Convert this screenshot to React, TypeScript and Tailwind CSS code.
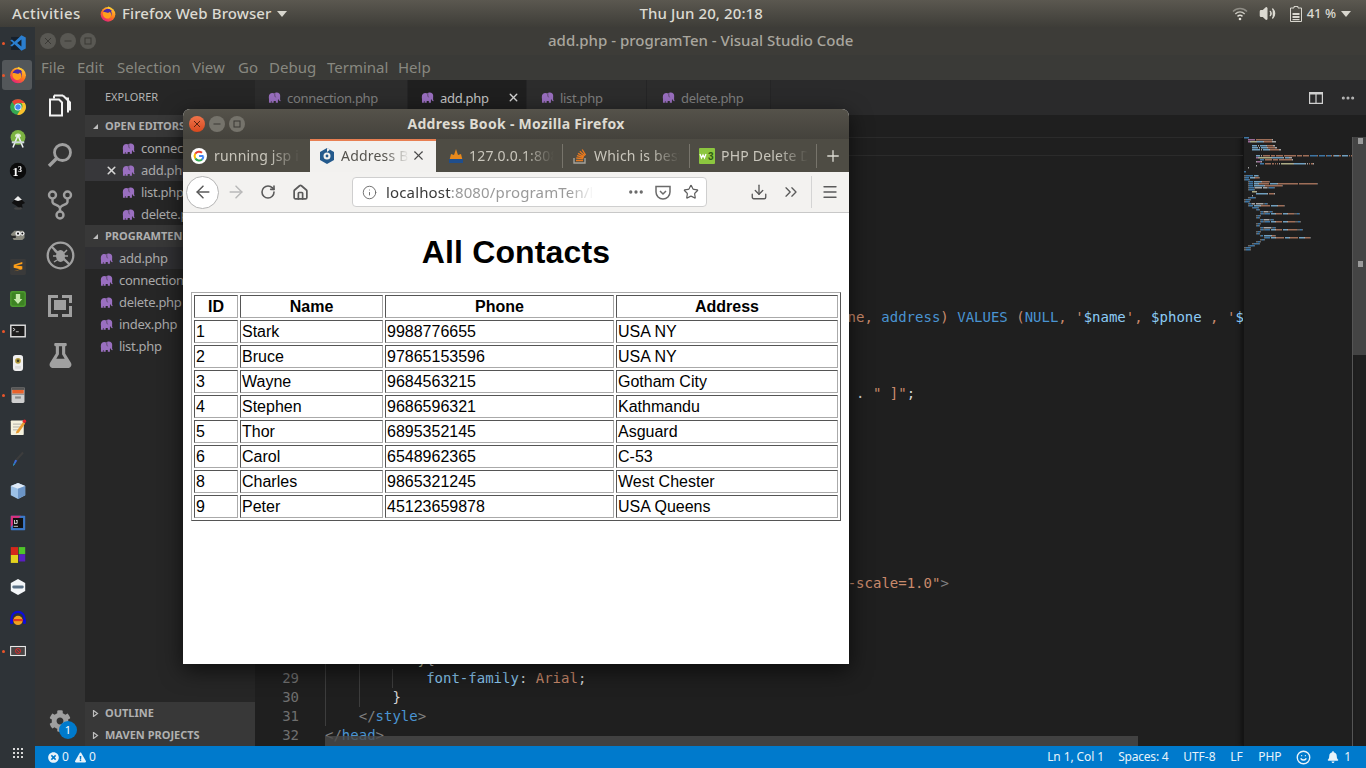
import React from 'react';
import { ArrowLeft, ArrowRight, RotateCw, Info, Star, Download, ChevronsRight, Menu, X, Plus, Smile, Volume2, MoreHorizontal, House } from 'lucide-react';
import { FaBell, FaCog, FaExclamationTriangle, FaFlask, FaTimesCircle } from 'react-icons/fa';

const K = '#4a94d2', S = '#c98a6c', V = '#8ccbf5', W = '#d4d4d4', F = '#dcdcaa', P = '#c586c0', G = '#808080';
type Tok = [string, string];
const CODE: Tok[][] = [
  [['<?php', K]],
  [['    ', W], ['include', P], [' "connection.php"', S], [';', W]],
  [['    ', W], ['if', P], ['(', W], ['isset', F], ['(', W], ['$_POST', V], ['[', W], ["'submit'", S], [']', W], ['))', W], ['{', W]],
  [],
  [['        ', W], ['$name', V], [' = ', W], ['$_POST', V], ['[', W], ["'name'", S], ['];', W]],
  [['        ', W], ['$phone', V], [' = ', W], ['$_POST', V], ['[', W], ["'phone'", S], ['];', W]],
  [['        ', W], ['$address', V], [' = ', W], ['$_POST', V], ['[', W], ["'address'", S], ['];', W]],
  [],
  [],
  [['            ', W], ['$sql', V], [' = ', W], ['"INSERT INTO contact (contact_id, name, phone, ', S], ['address', K], [') ', S], ['VALUES', K], [' (', S], ['NULL', K], [", '", S], ['$name', V], ["', ", S], ['$phone', V], [" , '", S], ['$address', V], ["')\"", S], [';', W]],
  [['            ', W], ['if', P], ['(', W], ['mysqli_query', F], ['(', W], ['$connection', V], [', ', W], ['$sql', V], ['))', W], ['{', W]],
  [['                ', W], ['echo', K], [' "Record added successfully"', S], [';', W]],
  [['            ', W], ['}', W], ['else', P], ['{', W]],
  [['                ', W], ['echo', K], [' "Error is [ "', S], [' . ', W], ['mysqli_error', F], ['(', W], ['$connection', V], [')', W], [' . ', W], ['" ]"', S], [';', W]],
  [['            ', W], ['}', W]],
  [['    ', W], ['}', W]],
  [],
  [['?>', K]],
  [],
  [['<!', G], ['DOCTYPE', K], [' ', W], ['html', V], ['>', G]],
  [['<', G], ['html', K], [' ', W], ['lang', V], ['=', W], ['"en"', S], ['>', G]],
  [['<', G], ['head', K], ['>', G]],
  [['    ', W], ['<', G], ['meta', K], [' ', W], ['charset', V], ['=', W], ['"UTF-8"', S], ['>', G]],
  [['    ', W], ['<', G], ['meta', K], [' ', W], ['name', V], ['=', W], ['"viewport"', S], [' ', W], ['content', V], ['=', W], ['"width=device-width, initial-scale=1.0"', S], ['>', G]],
  [['    ', W], ['<', G], ['meta', K], [' ', W], ['http-equiv', V], ['=', W], ['"X-UA-Compatible"', S], ['>', G]],
  [['    ', W], ['<', G], ['title', K], ['>', G], ['Address Book', W], ['</', G], ['title', K], ['>', G]],
  [['    ', W], ['<', G], ['style', K], ['>', G]],
  [['        ', W], ['body', F], ['{', W]],
  [['            ', W], ['font-family', V], [': ', W], ['Arial', S], [';', W]],
  [['        ', W], ['}', W]],
  [['    ', W], ['</', G], ['style', K], ['>', G]],
  [['</', G], ['head', K], ['>', G]],
  [['<', G], ['body', K], ['>', G]],
  [['    ', W], ['<', G], ['h1', K], ['>', G], ['Add Contact', W], ['</', G], ['h1', K], ['>', G]],
  [['    ', W], ['<', G], ['form', K], [' ', W], ['action', V], ['=', W], ['"add.php"', S], [' ', W], ['method', V], ['=', W], ['"POST"', S], ['>', G]],
  [['        ', W], ['<', G], ['table', K], ['>', G]],
  [['            ', W], ['<', G], ['tr', K], ['>', G]],
  [['                ', W], ['<', G], ['td', K], ['>', G], ['Name', W], ['</', G], ['td', K], ['>', G]],
  [['                ', W], ['<', G], ['td', K], ['><', G], ['input', K], [' ', W], ['type', V], ['=', W], ['"text"', S], [' ', W], ['name', V], ['=', W], ['"name"', S], ['></', G], ['td', K], ['>', G]],
  [['            ', W], ['</', G], ['tr', K], ['>', G]],
  [['            ', W], ['<', G], ['tr', K], ['>', G]],
  [['                ', W], ['<', G], ['td', K], ['>', G], ['Phone', W], ['</', G], ['td', K], ['>', G]],
  [['                ', W], ['<', G], ['td', K], ['><', G], ['input', K], [' ', W], ['type', V], ['=', W], ['"text"', S], [' ', W], ['name', V], ['=', W], ['"phone"', S], ['></', G], ['td', K], ['>', G]],
  [['            ', W], ['</', G], ['tr', K], ['>', G]],
  [['            ', W], ['<', G], ['tr', K], ['>', G]],
  [['                ', W], ['<', G], ['td', K], ['>', G], ['Address', W], ['</', G], ['td', K], ['>', G]],
  [['                ', W], ['<', G], ['td', K], ['><', G], ['input', K], [' ', W], ['type', V], ['=', W], ['"text"', S], [' ', W], ['name', V], ['=', W], ['"address"', S], ['></', G], ['td', K], ['>', G]],
  [['            ', W], ['</', G], ['tr', K], ['>', G]],
  [['            ', W], ['<', G], ['tr', K], ['>', G]],
  [['                ', W], ['<', G], ['td', K], [' ', W], ['colspan', V], ['=', W], ['"2"', S], ['>', G]],
  [['                    ', W], ['<', G], ['input', K], [' ', W], ['type', V], ['=', W], ['"submit"', S], [' ', W], ['name', V], ['=', W], ['"submit"', S], [' ', W], ['value', V], ['=', W], ['"Add"', S], ['>', G]],
  [['                ', W], ['</', G], ['td', K], ['>', G]],
  [['            ', W], ['</', G], ['tr', K], ['>', G]],
  [['        ', W], ['</', G], ['table', K], ['>', G]],
  [['    ', W], ['</', G], ['form', K], ['>', G]],
  [['</', G], ['body', K], ['>', G]],
  [['</', G], ['html', K], ['>', G]],
];

function Minimap() {
  const rects: React.ReactElement[] = [];
  CODE.forEach((line, y) => {
    let col = 0;
    line.forEach(([t, c], i) => {
      const re = /\S+/g;
      let m: RegExpExecArray | null;
      while ((m = re.exec(t))) {
        rects.push(<rect key={`${y}-${i}-${m.index}`} x={col + m.index} y={y * 2} width={m[0].length} height={1.5} fill={c} opacity={0.75} />);
      }
      col += t.length;
    });
  });
  return (
    <svg width="109" height="120" viewBox="0 0 109 120">
      {rects}
    </svg>
  );
}

const Elephant = ({ className = '' }: { className?: string }) => (
  <svg viewBox="0 0 16 13" className={`w-[13px] h-[11px] ${className}`} fill="#9a6fc0">
    <path d="M1 6C1 2.5 2.8 1 5.5 1c1 0 1.5.5 2.2.5C8.5.6 9.6.3 10.8.3c2.7 0 4.2 1.8 4.2 4 0 1.5-.2 3.2-.1 4.7.1 1.2.6 1.5 1.1 1.6-.6.6-2.2.6-2.7-.6l-.2-1.5-.9.7V13H9.6v-2.3H7V13H4.3v-2.3H3.6V13H1.2V8.2C1 7.400 1 6.700 1 6z" />
    <path d="M8.600 1.600c-.500 1.500-.300 3.400.8 4.700" stroke="#2a2a2a" strokeWidth=".7" fill="none" />
  </svg>
);

const FirefoxLogo = ({ size = 22 }: { size?: number }) => (
  <svg width={size} height={size} viewBox="0 0 24 24">
    <defs>
      <linearGradient id="ffa" x1="0.8" y1="0" x2="0.2" y2="1">
        <stop offset="0" stopColor="#ffd43a" />
        <stop offset="0.5" stopColor="#ff7a1a" />
        <stop offset="1" stopColor="#e31587" />
      </linearGradient>
    </defs>
    <circle cx="12" cy="12.500" r="11" fill="url(#ffa)" />
    <path d="M4.500 11a7.500 7.500 0 0 1 13-4.500L15 12z" fill="#4a2aa8" />
    <circle cx="12" cy="11.500" r="5.500" fill="#4a2aa8" />
    <path d="M4.500 9.500c2-.6 3.500-.4 5.500.4 1.600.6 3.800.2 4.800-1.400 1.300 1.600 2.500 3.300 1.900 6-.6 2.700-3.200 4.700-6.400 4.400C6.500 18.500 3.500 14 4.500 9.500z" fill="#ff9f1c" />
    <path d="M12 .5c3 1.300 5.300 3.500 5.700 6.500-1.500-2-3.700-3-6.200-3.200C12.500 3 12.500 1.500 12 .5z" fill="#ffd02e" />
  </svg>
);

const GoogleG = () => (
  <svg width="16" height="16" viewBox="0 0 16 16">
    <circle cx="8" cy="8" r="8" fill="#fff" />
    <path d="M12.500 8.100H8.100" stroke="#4285f4" strokeWidth="2" fill="none" />
    <path d="M12.400 8.500a4.500 4.500 0 0 1-1.500 3" stroke="#4285f4" strokeWidth="2" fill="none" />
    <path d="M11 11.400A4.500 4.500 0 0 1 4.300 10.400" stroke="#34a853" strokeWidth="2" fill="none" />
    <path d="M4.300 10.400a4.500 4.500 0 0 1 0-4.800" stroke="#fbbc05" strokeWidth="2" fill="none" />
    <path d="M4.300 5.600A4.500 4.500 0 0 1 11 4.800" stroke="#ea4335" strokeWidth="2" fill="none" />
  </svg>
);

const launcherIcons: React.ReactNode[] = [
  <svg width="24" height="24" viewBox="0 0 20 20"><rect x="2" y="3" width="14" height="15" fill="#16202c" /><path d="M14 1l5 2.500v13L14 19 6 11.500 3 14l-2-1 3.500-3L1 7l2-1 3 2.500z" fill="#2b7fd0" /><path d="M14 6L9 10l5 4z" fill="#16202c" /></svg>,
  <FirefoxLogo size={24} />,
  <svg width="24" height="24" viewBox="0 0 22 22"><circle cx="11" cy="11" r="10" fill="#34a853" /><path d="M11 1a10 10 0 0 1 8.700 5H11a5 5 0 0 0-4.500 2.800L3.500 4A10 10 0 0 1 11 1z" fill="#ea4335" /><path d="M19.700 6A10 10 0 0 1 10 21l4.500-7A5 5 0 0 0 15 6z" fill="#fbc02d" /><circle cx="11" cy="11" r="4.500" fill="#fff" /><circle cx="11" cy="11" r="3.500" fill="#4285f4" /></svg>,
  <svg width="24" height="26" viewBox="0 0 22 24"><circle cx="11" cy="10" r="9.500" fill="#7cb342" /><path d="M7 9a4 4 0 0 1 8 0z" fill="#dcedc8" /><path d="M11 7L4.500 23M11 7l6.500 16" stroke="#eceff1" strokeWidth="2" /><rect x="3" y="15" width="16" height="2.500" fill="#cfd8dc" /></svg>,
  <svg width="24" height="24" viewBox="0 0 24 24"><circle cx="12" cy="12" r="11.500" fill="#0b0b0b" /><text x="4.500" y="19" fontSize="17" fontWeight="700" fill="#fff" fontFamily="Liberation Serif, serif">1</text><text x="12" y="14" fontSize="11" fontWeight="700" fill="#fff" fontFamily="Liberation Serif, serif">3</text></svg>,
  <svg width="24" height="24" viewBox="0 0 22 22"><path d="M11 2l9 9-4 2 1 4-3-1-2 3-2-4-7-4z" fill="#101010" /><path d="M11 2l5 5-5 1.500L6 7z" fill="#eee" /><ellipse cx="11" cy="18" rx="5" ry="1.500" fill="#444" /></svg>,
  <svg width="24" height="20" viewBox="0 0 24 20"><path d="M2 9l5-5h12l2 3v7l-3 3H6z" fill="#8a8a7e" /><circle cx="12" cy="8" r="3.500" fill="#eee" /><circle cx="18" cy="8" r="3" fill="#eee" /><circle cx="12" cy="8" r="1.500" fill="#111" /><circle cx="18" cy="8" r="1.300" fill="#111" /><path d="M2 11h7v3H3z" fill="#2b2b2b" /></svg>,
  <svg width="24" height="24" viewBox="0 0 24 24"><rect x="1" y="1" width="22" height="22" rx="2" fill="#3a3a3a" /><path d="M18 5L6 9v4l9 2-9 3 12-3v-4L9 10l9-2z" fill="#ff9f18" /></svg>,
  <svg width="24" height="24" viewBox="0 0 24 24"><rect x="1" y="1" width="22" height="22" rx="3" fill="#4d9a2f" /><rect x="3" y="3" width="18" height="18" rx="2" fill="#3d8323" /><path d="M9 5h6v7h3l-6 7-6-7h3z" fill="#c6e8ac" /></svg>,
  <svg width="24" height="20" viewBox="0 0 24 20"><rect x="1" y="1" width="22" height="18" fill="#ddd" /><rect x="3" y="3" width="18" height="14" fill="#1d1d1d" /><path d="M5 6l3 2-3 2" stroke="#fff" fill="none" /><path d="M9 11h4" stroke="#fff" /></svg>,
  <svg width="20" height="24" viewBox="0 0 20 24"><rect x="3" y="1" width="14" height="22" rx="4" fill="#efefef" /><circle cx="10" cy="9" r="4" fill="#b29a3c" /><circle cx="10" cy="9" r="1.800" fill="#3d3d2a" /><rect x="6" y="16" width="8" height="4" fill="#ddd" /></svg>,
  <svg width="24" height="24" viewBox="0 0 24 24"><rect x="3" y="1" width="18" height="22" rx="2" fill="#cfcfcf" /><rect x="3" y="1" width="18" height="4" fill="#555" /><rect x="4" y="5" width="16" height="5" fill="#e8622c" /><rect x="8" y="14" width="8" height="3" fill="#8a8a8a" /><path d="M3 11h18" stroke="#666" /></svg>,
  <svg width="24" height="24" viewBox="0 0 24 24"><rect x="2" y="3" width="18" height="20" rx="1" fill="#f4f1de" /><path d="M5 8h12M5 12h10M5 16h8" stroke="#999" /><path d="M10 18l9-13 3 2-9 13-4 1z" fill="#e89b2f" /><circle cx="21" cy="4" r="2.500" fill="#e0242c" /></svg>,
  <svg width="20" height="24" viewBox="0 0 20 24"><path d="M16 2l2 2-9 10-3-1z" fill="#3d3d3d" /><path d="M6 13l3 1-3 5-2-1z" fill="#3b6ad8" /><path d="M4 18l2 1-3 3z" fill="#2bb2f0" /></svg>,
  <svg width="24" height="24" viewBox="0 0 24 24"><path d="M12 1l10 4v13l-10 5-10-5V5z" fill="#9cc1e6" /><path d="M12 1l10 4-10 4L2 5z" fill="#dfeaf6" /><path d="M12 9v14l10-5V5z" fill="#6c95c6" /></svg>,
  <svg width="24" height="24" viewBox="0 0 24 24"><rect x="2" y="2" width="20" height="20" rx="1" fill="#3b78c9" /><path d="M2 2h14L2 18z" fill="#d8327f" /><rect x="5" y="5" width="14" height="14" fill="#111" /><text x="6" y="13" fontSize="7" fontWeight="700" fill="#fff" fontFamily="Liberation Sans, sans-serif">IJ</text><rect x="6" y="16" width="6" height="1" fill="#fff" /></svg>,
  <svg width="24" height="24" viewBox="0 0 24 24"><rect x="2" y="1" width="10" height="11" fill="#d4281c" /><rect x="13" y="1" width="9" height="10" fill="#4fc52a" /><rect x="2" y="12" width="10" height="11" fill="#e3d21d" /><rect x="13" y="11" width="9" height="10" fill="#5a1fc0" /></svg>,
  <svg width="24" height="24" viewBox="0 0 24 24"><path d="M12 1l10 5.500v11L12 23 2 17.500v-11z" fill="#f3f6f8" /><rect x="4" y="10" width="16" height="4" rx="2" fill="#5a7186" /></svg>,
  <svg width="24" height="24" viewBox="0 0 24 24"><path d="M3 15V11a9 9 0 0 1 18 0v4" stroke="#0d0dd8" strokeWidth="3" fill="none" /><circle cx="12" cy="14" r="6.500" fill="#f0a21e" /><rect x="5" y="12" width="14" height="3" fill="#e03a1e" /><rect x="1" y="12" width="4" height="7" rx="1.500" fill="#0d0dd8" /><rect x="19" y="12" width="4" height="7" rx="1.500" fill="#0d0dd8" /></svg>,
  <svg width="24" height="20" viewBox="0 0 24 20"><rect x="1" y="3" width="22" height="14" fill="#e8e8e8" /><rect x="2.500" y="4.500" width="19" height="11" fill="#4a4646" /><circle cx="12" cy="10" r="3.500" fill="none" stroke="#d92a2a" strokeWidth="1.300" /><path d="M9.500 7.500l5 5" stroke="#d92a2a" strokeWidth="1.300" /></svg>,
];
const running = new Set([0, 1, 9, 11, 19]);

function Launcher() {
  return (
    <div className="w-[35px] bg-[#2e3337] flex flex-col shrink-0">
      {launcherIcons.map((ic, i) => (
        <div key={i} className="h-[32px] relative flex items-center justify-center">
          {i === 1 && <div className="absolute left-[2px] top-[1px] w-[30px] h-[30px] rounded-[3px] bg-[#53575a]" />}
          {running.has(i) && <div className="absolute left-[2px] top-[15px] w-[3px] h-[3px] rounded-full bg-[#e9552a]" />}
          <div className="relative flex scale-[0.72] items-center justify-center">{ic}</div>
        </div>
      ))}
      <div className="mt-auto mb-[10px] mx-auto grid grid-cols-3 gap-[2px] w-[10px]">
        {Array.from({ length: 9 }).map((_, i) => <div key={i} className="w-[2px] h-[2px] bg-[#d8d8d8]" />)}
      </div>
    </div>
  );
}

function TopBar() {
  return (
    <div className="h-[27px] shrink-0 relative flex items-center bg-gradient-to-b from-[#5b5850] to-[#3e3d38] text-[#dcdad2] text-[15px] font-medium">
      <span className="ml-[12px] w-[88px] tracking-[0.4px]">Activities</span>
      <FirefoxLogo size={16} />
      <span className="ml-[6px] tracking-[0.1px]">Firefox Web Browser</span>
      <svg width="10" height="6" viewBox="0 0 10 6" className="ml-[5px]"><path d="M0 0h10L5 6z" fill="#d8d6ce" /></svg>
      <span className="ml-[353px] tracking-[0.1px]">Thu Jun 20, 20:18</span>
      <div className="ml-auto flex items-center">
        <svg width="16" height="14" viewBox="0 0 16 14" fill="none" stroke="#8e8c85" strokeWidth="1.500" className="mr-[11px]">
          <path d="M1 4.500c4-4 10-4 14 0" /><path d="M3.300 7c2.800-2.600 6.600-2.600 9.400 0" stroke="#c9c7bf" /><path d="M5.500 9.300c1.500-1.200 3.500-1.200 5 0" stroke="#e2e0d9" /><circle cx="8" cy="12" r="1.300" fill="#e2e0d9" stroke="none" />
        </svg>
        <Volume2 size={17} strokeWidth={2} className="text-[#dcdad2] mr-[14px]" fill="#dcdad2" />
        <svg width="12" height="16" viewBox="0 0 12 16" className="mr-[5px]"><path d="M4 .5h4v1.500h3.500v13.500H.5V2H4z" fill="none" stroke="#d8d6ce" strokeWidth="1" /><rect x="2.500" y="7" width="7" height="2" fill="#d8d6ce" /><rect x="2.500" y="10" width="7" height="2" fill="#d8d6ce" /><rect x="2.500" y="13" width="7" height="1.200" fill="#d8d6ce" /></svg>
        <span className="text-[13px] mr-[5px]">41 %</span>
        <svg width="10" height="6" viewBox="0 0 10 6" className="mr-[15px]"><path d="M0 0h10L5 6z" fill="#d8d6ce" /></svg>
      </div>
    </div>
  );
}

const menu: [string, string][] = [['File', 'w-[36px]'], ['Edit', 'w-[40px]'], ['Selection', 'w-[75px]'], ['View', 'w-[46px]'], ['Go', 'w-[31px]'], ['Debug', 'w-[58px]'], ['Terminal', 'w-[71px]'], ['Help', 'w-[40px]']];

function WinBtn({ kind }: { kind: 'x' | 'm' | 'r' }) {
  return (
    <div className="w-[16px] h-[16px] rounded-full bg-[#595853] flex items-center justify-center">
      <svg width="8" height="8" viewBox="0 0 8 8" fill="none" stroke="#3a3935" strokeWidth="1">
        {kind === 'x' && <path d="M1 1l6 6M7 1L1 7" />}
        {kind === 'm' && <path d="M0.500 4h7" />}
        {kind === 'r' && <rect x="1" y="1" width="6" height="6" />}
      </svg>
    </div>
  );
}

function SideRow({ label, x = false, pl, active, hover }: { label: string; x?: boolean; pl: string; active?: boolean; hover?: boolean }) {
  return (
    <div className={`h-[22px] flex items-center relative text-[13px] tracking-[-0.3px] text-[#a9a9a9] ${pl} ${active ? 'bg-[#37373a]' : ''} ${hover ? 'bg-[#303033]' : ''}`}>
      {x && <X size={13} strokeWidth={3} className="absolute left-[20px] text-[#d6d6d6]" />}
      <Elephant className="mr-[6px]" />
      <span className="whitespace-nowrap pt-[2px]">{label}</span>
    </div>
  );
}

function SectionHead({ label, open }: { label: string; open?: boolean }) {
  return (
    <div className="h-[22px] flex items-center relative pl-[20px] text-[11px] font-bold text-[#b0b0b0] whitespace-nowrap overflow-hidden bg-[#383838]">
      <svg width="7" height="7" viewBox="0 0 7 7" className="absolute left-[7px]">
        {open ? <path d="M6 1v5H1z" fill="#bdbdbd" /> : <path d="M1.500 0.500L5.500 3.500 1.500 6.500z" fill="none" stroke="#bdbdbd" strokeWidth="1.200" />}
      </svg>
      {label}
    </div>
  );
}

function Activity() {
  const c = '#a0a0a0';
  return (
    <div className="w-[50px] shrink-0 bg-[#333333] flex flex-col items-center relative">
      <div className="h-[50px] flex items-center justify-center">
        <svg width="24" height="24" viewBox="0 0 24 24" fill="none" stroke="#f2f2f2" strokeWidth="2">
          <path d="M6 2.500h9M2 6.500h9l3 3v13H2z" /><path d="M18 5.500h2v14" /><path d="M6 2.500v3M15 2.500l7 7v8" />
        </svg>
      </div>
      <div className="h-[50px] flex items-center justify-center">
        <svg width="26" height="26" viewBox="0 0 26 26" fill="none" stroke={c} strokeWidth="2.800"><circle cx="15.500" cy="10.500" r="8" /><path d="M9.500 16.500L2 24" strokeWidth="3.400" /></svg>
      </div>
      <div className="h-[50px] flex items-center justify-center">
        <svg width="26" height="30" viewBox="0 0 26 30" fill="none" stroke={c} strokeWidth="2.400"><circle cx="5.500" cy="5" r="3.500" /><circle cx="20.500" cy="5" r="3.500" /><circle cx="13" cy="25" r="3.500" /><path d="M5.500 9v3c0 3 7.500 3 7.500 6.500V21M20.500 9v3c0 3-7.500 3-7.500 6.500" /></svg>
      </div>
      <div className="h-[50px] flex items-center justify-center">
        <svg width="29" height="29" viewBox="0 0 29 29" fill="none" stroke={c} strokeWidth="2.300"><circle cx="14.500" cy="14.500" r="12.800" /><path d="M5.500 5.500l18 18" /><ellipse cx="14.500" cy="15" rx="4.500" ry="6" fill={c} stroke="none" /><path d="M8 9l3 3M21 9l-3 3M7 15h4M18 15h4M8 21l3-2M21 21l-3-2" strokeWidth="1.500" /></svg>
      </div>
      <div className="h-[50px] flex items-center justify-center">
        <svg width="24" height="24" viewBox="0 0 24 24" fill={c}><path d="M0 2h10v3H3v16h7v3H0zM14 2h10v8h-3V5h-7zM14 21h7v-8h3v11H14zM6 7h12v10H6z" /></svg>
      </div>
      <div className="h-[50px] flex items-center justify-center">
        <FaFlask size={25} color={c} />
      </div>
      <div className="absolute bottom-[5px] left-[11px] w-[32px] h-[32px]">
        <FaCog size={22} color={c} className="absolute left-[3px] top-[1px]" />
        <div className="absolute left-[13px] top-[12px] w-[18px] h-[18px] rounded-full bg-[#007acc] text-white text-[11px] flex items-center justify-center">1</div>
      </div>
    </div>
  );
}

function Sidebar() {
  return (
    <div className="w-[170px] shrink-0 bg-[#262626] flex flex-col">
      <div className="h-[35px] flex items-center pl-[20px] text-[11px] text-[#b4b4b4]">EXPLORER</div>
      <SectionHead label="OPEN EDITORS" open />
      <SideRow label="connection.php" pl="pl-[37px]" />
      <SideRow label="add.php" pl="pl-[37px]" active x />
      <SideRow label="list.php" pl="pl-[37px]" />
      <SideRow label="delete.php" pl="pl-[37px]" />
      <SectionHead label="PROGRAMTEN" open />
      <SideRow label="add.php" pl="pl-[15px]" hover />
      <SideRow label="connection.php" pl="pl-[15px]" />
      <SideRow label="delete.php" pl="pl-[15px]" />
      <SideRow label="index.php" pl="pl-[15px]" />
      <SideRow label="list.php" pl="pl-[15px]" />
      <div className="flex-1" />
      <SectionHead label="OUTLINE" />
      <SectionHead label="MAVEN PROJECTS" />
    </div>
  );
}

function EditorTab({ label, w, active, pl }: { label: string; w: string; active?: boolean; pl: string }) {
  return (
    <div className={`h-full ${w} ${pl} shrink-0 flex items-center relative text-[13px] tracking-[-0.3px] border-r border-[#252526] ${active ? 'bg-[#1f1f1f] text-[#c4c4c4]' : 'bg-[#2c2c2c] text-[#7f7f7f]'}`}>
      <Elephant className="mr-[6px]" />
      <span className="pt-[2px]">{label}</span>
      {active && <X size={13} strokeWidth={2.600} className="absolute right-[6px] text-[#d4d4d4]" />}
    </div>
  );
}

function Editor() {
  return (
    <div className="flex-1 min-w-0 flex flex-col relative">
      <div className="h-[35px] shrink-0 bg-[#2a2a2b] flex items-center">
        <EditorTab label="connection.php" w="w-[153px]" pl="pl-[13px]" />
        <EditorTab label="add.php" w="w-[119px]" pl="pl-[13px]" active />
        <EditorTab label="list.php" w="w-[120px]" pl="pl-[14px]" />
        <EditorTab label="delete.php" w="w-[124px]" pl="pl-[15px]" />
        <div className="ml-auto flex items-center">
          <svg width="14" height="12" viewBox="0 0 14 12" fill="none" stroke="#d0d0d0" strokeWidth="1.200" className="mr-[17px]"><path d="M.600.600h12.800v10.800H.600zM7 .600v10.800" /><path d="M.600 1.500h12.800" strokeWidth="2" /></svg>
          <MoreHorizontal size={16} strokeWidth={2.600} className="text-[#b8b8b8] mr-[10px]" />
        </div>
      </div>
      <div className="h-[22px] shrink-0 bg-[#1f1f1f]" />
      <div className="flex-1 min-h-0 flex bg-[#1f1f1f] overflow-hidden">
        <div className="w-[988px] shrink-0 overflow-hidden font-['DejaVu_Sans_Mono',monospace] text-[14px] leading-[19px]">
          {CODE.slice(0, 33).map((line, i) => {
            const text = line.map((t) => t[0]).join('');
            const indent = (text.match(/^ */) as RegExpMatchArray)[0].length;
            return (
              <div key={i} className={`h-[19px] flex relative ${i === 0 ? 'border-y border-[#2b2b2b] leading-[17px]' : ''}`}>
                <span className="w-[44px] shrink-0 text-right text-[#6f6f6f]">{i + 1}</span>
                <span className="pl-[26px] whitespace-pre">
                  {line.map(([t, c], j) => <span key={j} style={{ color: c }}>{t}</span>)}
                </span>
                {Array.from({ length: Math.floor(indent / 4) }).map((_, k) => (
                  <i key={k} className="absolute top-0 bottom-0 w-px bg-[#3d3d3d]" style={{ left: 70 + k * 33.7 }} />
                ))}
              </div>
            );
          })}
        </div>
        <div className="w-[109px] shrink-0 border-l border-[#141414] shadow-[-2px_0_4px_#111]">
          <Minimap />
        </div>
        <div className="w-[14px] shrink-0 flex flex-col border-l border-[#555] relative">
          <div className="h-[218px] bg-[#444444]" />
          <div className="absolute left-[5px] top-[1px] w-[5px] h-[6px] bg-[#9a9a9a]" />
          <div className="absolute left-[5px] top-[124px] w-[5px] h-[6px] bg-[#9a9a9a]" />
        </div>
      </div>
      <div className="absolute left-[70px] bottom-0 w-[813px] h-[10px] bg-[#4a4a4a]/80" />
    </div>
  );
}

function StatusBar() {
  return (
    <div className="h-[22px] shrink-0 bg-[#007acc] text-[#e8f3fa] text-[12px] flex items-center">
      <FaTimesCircle size={11} className="ml-[13px]" />
      <span className="ml-[3px]">0</span>
      <FaExclamationTriangle size={11} className="ml-[6px]" />
      <span className="ml-[3px]">0</span>
      <div className="ml-auto flex items-center pr-[15px]">
        <span className="w-[71px] tracking-[-0.1px] whitespace-nowrap">Ln 1, Col 1</span>
        <span className="w-[65px] tracking-[-0.2px] whitespace-nowrap">Spaces: 4</span>
        <span className="w-[47px]">UTF-8</span>
        <span className="w-[28px]">LF</span>
        <span className="w-[38px]">PHP</span>
        <Smile size={15} strokeWidth={2.200} className="mr-[16px]" />
        <FaBell size={12} className="mr-[5px]" />
        <span>1</span>
      </div>
    </div>
  );
}

function VSCode() {
  return (
    <div className="flex-1 min-w-0 flex flex-col">
      <div className="h-[28px] shrink-0 bg-[#3d3c38] flex items-center relative text-[15px] font-medium text-[#a9a69e]">
        <div className="ml-[5px] flex gap-[4px]"><WinBtn kind="x" /><WinBtn kind="m" /><WinBtn kind="r" /></div>
        <span className="absolute left-[513px] whitespace-nowrap pb-[2px]">add.php - programTen - Visual Studio Code</span>
      </div>
      <div className="h-[25px] shrink-0 bg-[#3a3a37] flex items-center pl-[6px] text-[15px] text-[#888880]">
        {menu.map(([m, w]) => <span key={m} className={w}>{m}</span>)}
      </div>
      <div className="flex-1 min-h-0 flex">
        <Activity />
        <Sidebar />
        <Editor />
      </div>
      <StatusBar />
    </div>
  );
}

function FxTab({ icon, label, w, pl, box, gap }: { icon: React.ReactNode; label: string; w: string; pl: string; box: string; gap: string }) {
  return (
    <div className={`${w} ${pl} shrink-0 h-full flex items-center text-[14px] tracking-[0.2px] text-[#c9c6bc] relative`}>
      <div className={`shrink-0 w-[16px] h-[16px] flex items-center justify-center ${gap}`}>{icon}</div>
      <div className={`${box} overflow-hidden whitespace-nowrap [mask-image:linear-gradient(to_right,black_65%,transparent)]`}>{label}</div>
    </div>
  );
}

const Sep = () => <div className="w-px h-[24px] bg-[#77746b] shrink-0" />;

const rows: [string, string, string, string][] = [
  ['1', 'Stark', '9988776655', 'USA NY'],
  ['2', 'Bruce', '97865153596', 'USA NY'],
  ['3', 'Wayne', '9684563215', 'Gotham City'],
  ['4', 'Stephen', '9686596321', 'Kathmandu'],
  ['5', 'Thor', '6895352145', 'Asguard'],
  ['6', 'Carol', '6548962365', 'C-53'],
  ['8', 'Charles', '9865321245', 'West Chester'],
  ['9', 'Peter', '45123659878', 'USA Queens'],
];
const cell = 'h-[23px] p-0 px-px border border-t-[#555] border-l-[#555] border-b-[#aaa] border-r-[#aaa] align-middle leading-[19px]';

function Firefox() {
  return (
    <div className="absolute left-[183px] top-[109px] w-[666px] h-[555px] rounded-t-[7px] overflow-hidden shadow-[0_6px_22px_rgba(0,0,0,0.65)] flex flex-col bg-white">
      <div className="h-[30px] shrink-0 bg-gradient-to-b from-[#55524a] to-[#44423c] flex items-center relative">
        <div className="ml-[6px] flex gap-[4px]">
          <div className="w-[16px] h-[16px] rounded-full bg-gradient-to-b from-[#f0744a] to-[#d8481c] flex items-center justify-center">
            <svg width="8" height="8" viewBox="0 0 8 8" fill="none" stroke="#5a2410" strokeWidth="1"><path d="M1 1l6 6M7 1L1 7" /></svg>
          </div>
          <div className="w-[16px] h-[16px] rounded-full bg-[#75736b] flex items-center justify-center">
            <svg width="8" height="8" viewBox="0 0 8 8" fill="none" stroke="#3a3935"><path d="M.500 4h7" /></svg>
          </div>
          <div className="w-[16px] h-[16px] rounded-full bg-[#75736b] flex items-center justify-center">
            <svg width="8" height="8" viewBox="0 0 8 8" fill="none" stroke="#3a3935"><rect x="1" y="1" width="6" height="6" /></svg>
          </div>
        </div>
        <span className="absolute inset-x-0 text-center text-[14px] font-bold tracking-[0.3px] text-[#dedbd2] pb-[2px]">Address Book - Mozilla Firefox</span>
      </div>
      <div className="h-[33px] shrink-0 bg-[#4e4c44] flex items-center">
        <FxTab icon={<GoogleG />} label="running jsp in Tomcat" w="w-[127px]" pl="pl-[8px]" box="w-[86px]" gap="mr-[7px]" />
        <div className="w-[126px] shrink-0 h-full bg-[#f2f1ef] border-t-2 border-[#e87f52] flex items-center pl-[9px] pb-[2px] relative text-[14px] tracking-[0.2px] text-[#55534e]">
          <svg width="16" height="18" viewBox="0 0 16 18" className="shrink-0 mr-[6px]"><path d="M8 1l7 4v8l-7 4-7-4V5z" fill="#245a8c" /><circle cx="8" cy="9" r="3.500" fill="#f2f1ef" /><path d="M8 1l3 1.800L8 5z" fill="#f2f1ef" /><circle cx="8" cy="9" r="1.400" fill="#245a8c" /></svg>
          <div className="w-[68px] overflow-hidden whitespace-nowrap [mask-image:linear-gradient(to_right,black_65%,transparent)]">Address Book</div>
          <X size={15} strokeWidth={1.800} className="absolute left-[101px] text-[#4a4a4a]" />
        </div>
        <FxTab icon={<svg width="16" height="16" viewBox="0 0 16 16"><path d="M8 1l2 6 3-1 2 8H1l2-8 3 1z" fill="#e8891c" /><rect x="1" y="11" width="14" height="4" fill="#1f4e8c" /></svg>} label="127.0.0.1:8080 / localhost" w="w-[126px]" pl="pl-[12px]" box="w-[85px]" gap="mr-[5px]" />
        <Sep />
        <FxTab icon={<svg width="16" height="16" viewBox="0 0 16 16"><path d="M2 10v5h11v-5" fill="none" stroke="#a6a39b" strokeWidth="1.400" /><path d="M4 12.500h7M4.300 10l7 .6M4.900 7.700l6.800 1.800M6 5.400l6 3.200M7.800 3.300l5 4.500M10.200 1.500l3.400 5.600" stroke="#e8791e" strokeWidth="1.300" fill="none" /></svg>} label="Which is best for" w="w-[126px]" pl="pl-[9px]" box="w-[86px]" gap="mr-[6px]" />
        <Sep />
        <FxTab icon={<svg width="16" height="16" viewBox="0 0 16 16"><rect width="16" height="16" rx="1" fill="#8cc63f" /><path d="M1 6l1.500 4L4 7l1.500 3L7 6" stroke="#fff" strokeWidth="1.300" fill="none" /><text x="9" y="12" fontSize="10" fontWeight="700" fill="#2f5a12" fontFamily="Liberation Sans, sans-serif">3</text></svg>} label="PHP Delete Data" w="w-[126px]" pl="pl-[9px]" box="w-[87px]" gap="mr-[6px]" />
        <Sep />
        <Plus size={18} strokeWidth={1.800} className="ml-[7px] text-[#dcdad2]" />
      </div>
      <div className="h-[41px] shrink-0 bg-[#f3f2f0] border-b border-[#c8c8c8] flex items-center pl-[3px] text-[#5a5a5a]">
        <div className="w-[33px] h-[33px] rounded-full bg-white border border-[#b5b5b5] flex items-center justify-center shrink-0"><ArrowLeft size={20} strokeWidth={1.800} /></div>
        <div className="ml-px w-[32px] flex justify-center shrink-0"><ArrowRight size={20} strokeWidth={1.800} className="text-[#b9b9b9]" /></div>
        <div className="w-[32px] flex justify-center shrink-0"><RotateCw size={16} strokeWidth={2.400} /></div>
        <div className="w-[32px] flex justify-center shrink-0"><House size={17} strokeWidth={2.400} /></div>
        <div className="ml-[36px] w-[355px] h-[30px] shrink-0 bg-white border border-[#cfcfcf] rounded-[4px] flex items-center relative text-[15px]">
          <Info size={15} strokeWidth={1.500} className="ml-[9px] mr-[9px] text-[#6a6a6a] shrink-0" />
          <div className="w-[208px] tracking-[0.15px] overflow-hidden whitespace-nowrap [mask-image:linear-gradient(to_right,black_88%,transparent)]">
            <span className="text-[#3a3a3a]">localhost</span><span className="text-[#9a9a9a]">:8080/programTen/list.php</span>
          </div>
          <MoreHorizontal size={18} strokeWidth={2.400} className="absolute left-[274px] text-[#6a6a6a]" />
          <svg width="16" height="15" viewBox="0 0 16 15" fill="none" stroke="#6a6a6a" strokeWidth="1.500" className="absolute left-[302px]"><path d="M1 1.500h14v5.500a7 7 0 0 1-14 0z" /><path d="M5 6l3 3 3-3" /></svg>
          <Star size={16} strokeWidth={1.800} className="absolute left-[330px] text-[#5e5e5e]" />
        </div>
        <div className="ml-[36px] w-[32px] flex justify-center shrink-0"><Download size={18} strokeWidth={1.800} /></div>
        <div className="w-[32px] flex justify-center shrink-0"><ChevronsRight size={20} strokeWidth={1.600} /></div>
        <div className="ml-[4px] w-px h-[32px] bg-[#d4d4d4] shrink-0" />
        <div className="ml-[2px] w-[32px] flex justify-center shrink-0"><Menu size={18} strokeWidth={1.800} /></div>
      </div>
      <div className="flex-1 bg-white px-[8px] text-black font-['Liberation_Sans',Arial,sans-serif] text-[16px]">
        <h1 className="mt-[21px] mb-[21px] h-[37px] leading-[37px] text-[32px] font-bold text-center tracking-[0.15px]">All Contacts</h1>
        <table className="w-[650px] table-fixed border-separate border-spacing-[2px] border border-t-[#aaa] border-l-[#aaa] border-b-[#555] border-r-[#555]">
          <colgroup><col className="w-[44px]" /><col className="w-[143px]" /><col className="w-[229px]" /><col /></colgroup>
          <thead>
            <tr>{['ID', 'Name', 'Phone', 'Address'].map((h) => <th key={h} className={`${cell} font-bold text-center`}>{h}</th>)}</tr>
          </thead>
          <tbody>
            {rows.map((r) => <tr key={r[0]}>{r.map((c, i) => <td key={i} className={cell}>{c}</td>)}</tr>)}
          </tbody>
        </table>
      </div>
    </div>
  );
}

export default function App() {
  return (
    <div className="w-[1366px] h-[768px] relative overflow-hidden flex flex-col bg-[#1f1f1f] font-['Noto_Sans',sans-serif]">
      <TopBar />
      <div className="flex-1 min-h-0 flex">
        <Launcher />
        <VSCode />
      </div>
      <Firefox />
    </div>
  );
}
